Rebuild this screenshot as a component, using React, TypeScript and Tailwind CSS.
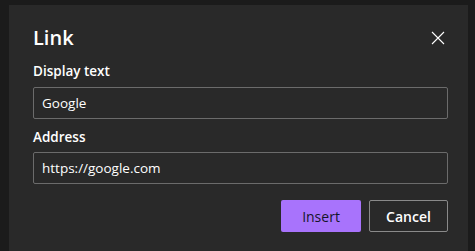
import { useState } from 'react'

export default function App() {
  const [text, setText] = useState('Google')
  const [address, setAddress] = useState('https://google.com')

  return (
    <div
      className="h-[251px] w-[475px] overflow-hidden bg-[#1b1b1b] pl-[9px] pt-[5px]"
      style={{ fontFamily: '"Open Sans", "Noto Sans", sans-serif' }}
    >
      <div className="relative h-[260px] w-[459px] bg-[#292929] pl-[24px] pr-[20px] pt-[19px]">
        <button type="button" className="absolute left-[420px] top-[24px] flex h-[18px] w-[18px] items-center justify-center text-white">
          <svg width="14" height="14" viewBox="0 0 14 14" fill="none" stroke="currentColor" strokeWidth="1.1">
            <path d="M1 1 L13 13 M13 1 L1 13" />
          </svg>
        </button>

        <h1 className="text-[20px] font-semibold leading-[28px] text-white">Link</h1>

        <label className="mt-[9px] block text-[13.5px] font-semibold leading-[20px] text-white">Display text</label>
        <input
          value={text}
          onChange={e => setText(e.target.value)}
          className="mt-[6px] block h-[32px] w-full rounded-[2px] border border-[#6b6b6b] bg-[#292929] px-[8px] text-[13.5px] text-white outline-none"
        />

        <label className="mt-[8px] block text-[13.5px] font-semibold leading-[20px] text-white">Address</label>
        <input
          value={address}
          onChange={e => setAddress(e.target.value)}
          className="mt-[5px] block h-[32px] w-full rounded-[2px] border border-[#6b6b6b] bg-[#292929] px-[8px] text-[13.5px] text-white outline-none"
        />

        <div className="mt-[16px] flex justify-end gap-[8px]">
          <button type="button" className="h-[32px] w-[80px] rounded-[2px] bg-[#a873fc] text-[14px] font-medium text-[#15152a]">
            Insert
          </button>
          <button type="button" className="h-[32px] w-[79px] rounded-[2px] border border-[#8a8a8a] bg-[#292929] text-[14px] font-semibold text-white">
            Cancel
          </button>
        </div>
      </div>
    </div>
  )
}
